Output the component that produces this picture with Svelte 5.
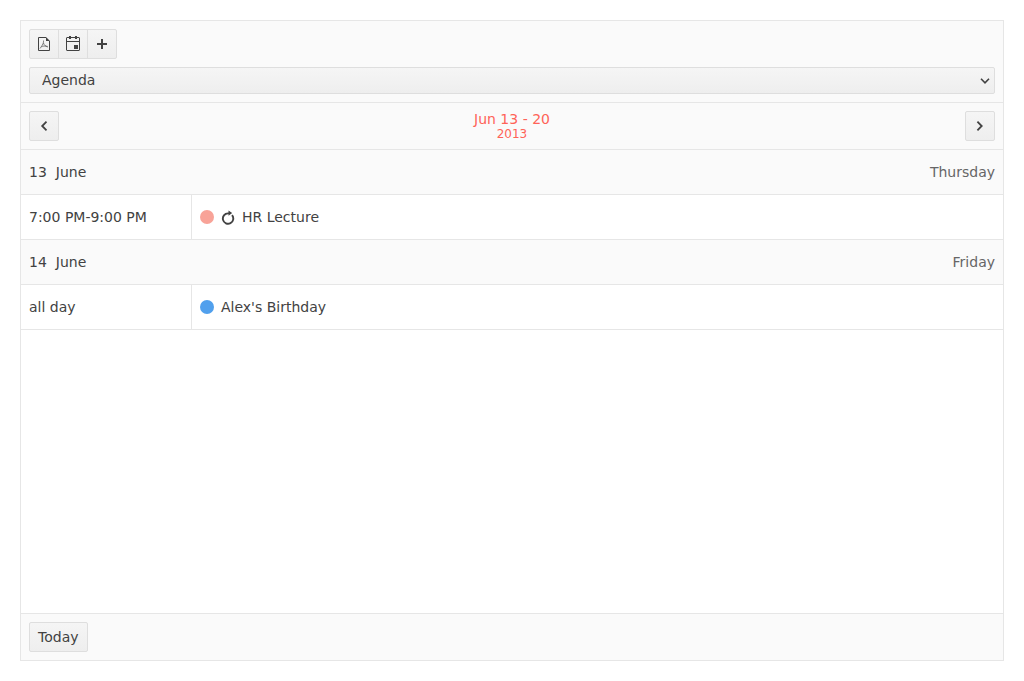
<script>
  let view = $state('Agenda');
  const views = ['Day', 'Week', 'Month', 'Agenda', 'Timeline'];
  const days = [
    {
      day: 13,
      month: 'June',
      weekday: 'Thursday',
      events: [{ time: '7:00 PM-9:00 PM', title: 'HR Lecture', color: '#f8a398', recurring: true }]
    },
    {
      day: 14,
      month: 'June',
      weekday: 'Friday',
      events: [{ time: 'all day', title: "Alex's Birthday", color: '#51a0ed', recurring: false }]
    }
  ];
</script>

<main class="scheduler">
  <header class="toolbar">
    <div class="group">
      <button class="btn icon-btn" aria-label="Export to PDF">
        <svg width="16" height="16" viewBox="0 0 16 16" fill="none" stroke="currentColor">
          <path d="M10 1.500H2.500v13h11V5" />
          <path d="M10 1v4h4z" fill="currentColor" stroke="none" />
          <path d="M7.500 4.500c.3 2-.5 4-3.500 8M7.500 7c.5 2 2 3.500 4.500 4M5.500 10.800c1.500-.8 3-1 6-.5" stroke-width=".8" opacity=".8" />
        </svg>
      </button>
      <button class="btn icon-btn" aria-label="Calendar">
        <svg width="16" height="16" viewBox="0 0 16 16" fill="currentColor">
          <path fill-rule="evenodd" d="M2 1h12l1 1v12l-1 1H2l-1-1V2zM2 2v3h12V2zM2 6v8h12V6z" />
          <path d="M4 0h2v3H4zM10 0h2v3h-2zM9 9h4v4H9z" />
        </svg>
      </button>
      <button class="btn icon-btn" aria-label="Add event">
        <svg width="16" height="16" viewBox="0 0 16 16" fill="currentColor">
          <path d="M7 3h2v4h4v2H9v4H7V9H3V7h4z" />
        </svg>
      </button>
    </div>
    <div class="select">
      <select class="btn" aria-label="View" bind:value={view}>
        {#each views as name}
          <option>{name}</option>
        {/each}
      </select>
      <svg class="arrow" width="10" height="6" viewBox="0 0 10 6" fill="none" stroke="currentColor" stroke-width="1.600">
        <path d="M1 .8l4 4 4-4" />
      </svg>
    </div>
  </header>

  <nav class="navigation" aria-label="Date range">
    <button class="btn icon-btn" aria-label="Previous">
      <svg width="16" height="16" viewBox="0 0 16 16" fill="none" stroke="currentColor" stroke-width="1.800">
        <path d="M10.500 3.700L6.200 8l4.300 4.300" />
      </svg>
    </button>
    <a class="range" href="#range">
      <span>Jun 13 - 20</span>
      <small>2013</small>
    </a>
    <button class="btn icon-btn" aria-label="Next">
      <svg width="16" height="16" viewBox="0 0 16 16" fill="none" stroke="currentColor" stroke-width="1.800">
        <path d="M5.400 3.700L9.700 8l-4.300 4.300" />
      </svg>
    </button>
  </nav>

  <div class="content">
    <table>
      {#each days as d}
        <tbody>
          <tr>
            <th colspan="2" scope="rowgroup">
              <div class="day">
                <span>{d.day}</span>
                <span>{d.month}</span>
                <span class="weekday">{d.weekday}</span>
              </div>
            </th>
          </tr>
          {#each d.events as event}
            <tr>
              <td class="time">{event.time}</td>
              <td>
                <div class="event">
                  <span class="mark" style="background: {event.color}"></span>
                  {#if event.recurring}
                    <svg width="14" height="16" viewBox="0 0 14 16" role="img" aria-label="Recurring">
                      <path d="M8 4.400H7A5.200 5.200 0 1 0 11 6.200" fill="none" stroke="currentColor" stroke-width="1.900" />
                      <path d="M7.500 1.500l3.700 2.500-3.700 2.700z" fill="currentColor" />
                    </svg>
                  {/if}
                  <span>{event.title}</span>
                </div>
              </td>
            </tr>
          {/each}
        </tbody>
      {/each}
    </table>
  </div>

  <footer class="footer">
    <button class="btn">Today</button>
  </footer>
</main>

<style>
  :global(body) {
    background: #fff;
  }
  .scheduler,
  .scheduler * {
    box-sizing: border-box;
  }
  .scheduler {
    display: flex;
    flex-direction: column;
    min-height: calc(100vh - 40px);
    margin: 20px;
    border: 1px solid #e6e6e6;
    color: #424242;
    font: 14px/20px "DejaVu Sans", sans-serif;
  }
  .toolbar,
  .navigation,
  .footer {
    padding: 8px;
    background: #fafafa;
  }
  .toolbar {
    display: flex;
    flex-direction: column;
    gap: 8px;
    border-bottom: 1px solid #e6e6e6;
  }
  .group {
    display: flex;
  }
  .group .btn {
    border-radius: 0;
  }
  .group .btn:first-child {
    border-radius: 2px 0 0 2px;
  }
  .group .btn:last-child {
    border-radius: 0 2px 2px 0;
  }
  .group .btn + .btn {
    margin-left: -1px;
  }
  .btn {
    height: 30px;
    padding: 0 8px;
    border: 1px solid #dedede;
    border-radius: 2px;
    background: linear-gradient(#f5f5f5, #eeeeee);
    color: #424242;
    font: inherit;
    cursor: pointer;
  }
  .icon-btn {
    display: flex;
    align-items: center;
    justify-content: center;
    width: 30px;
    padding: 0;
  }
  .select {
    display: flex;
    position: relative;
  }
  .select .btn {
    width: 100%;
    height: 27px;
    padding: 0 24px 2px 12px;
    appearance: none;
  }
  .arrow {
    position: absolute;
    right: 5px;
    top: 11px;
    pointer-events: none;
  }
  .navigation {
    display: flex;
    align-items: center;
    justify-content: space-between;
    border-bottom: 1px solid #e6e6e6;
  }
  .range {
    display: flex;
    flex-direction: column;
    align-items: center;
    color: #ff6358;
    line-height: 16px;
    text-decoration: none;
  }
  .range small {
    font-size: 12px;
    line-height: 14px;
  }
  .content {
    flex: 1;
    background: #fff;
  }
  table {
    width: 100%;
    border-spacing: 0;
    table-layout: auto;
  }
  th,
  td {
    height: 45px;
    padding: 0 8px;
    border-bottom: 1px solid #e6e6e6;
    font-weight: 400;
    text-align: left;
  }
  th {
    background: #fafafa;
  }
  .time {
    width: 171px;
    border-right: 1px solid #e6e6e6;
    white-space: nowrap;
  }
  .day {
    display: flex;
    gap: 9px;
  }
  .weekday {
    margin-left: auto;
    color: #666;
  }
  .event {
    display: flex;
    align-items: center;
    gap: 7px;
  }
  .mark {
    width: 14px;
    height: 14px;
    border-radius: 50%;
  }
  .footer {
    display: flex;
    border-top: 1px solid #e6e6e6;
  }
</style>
